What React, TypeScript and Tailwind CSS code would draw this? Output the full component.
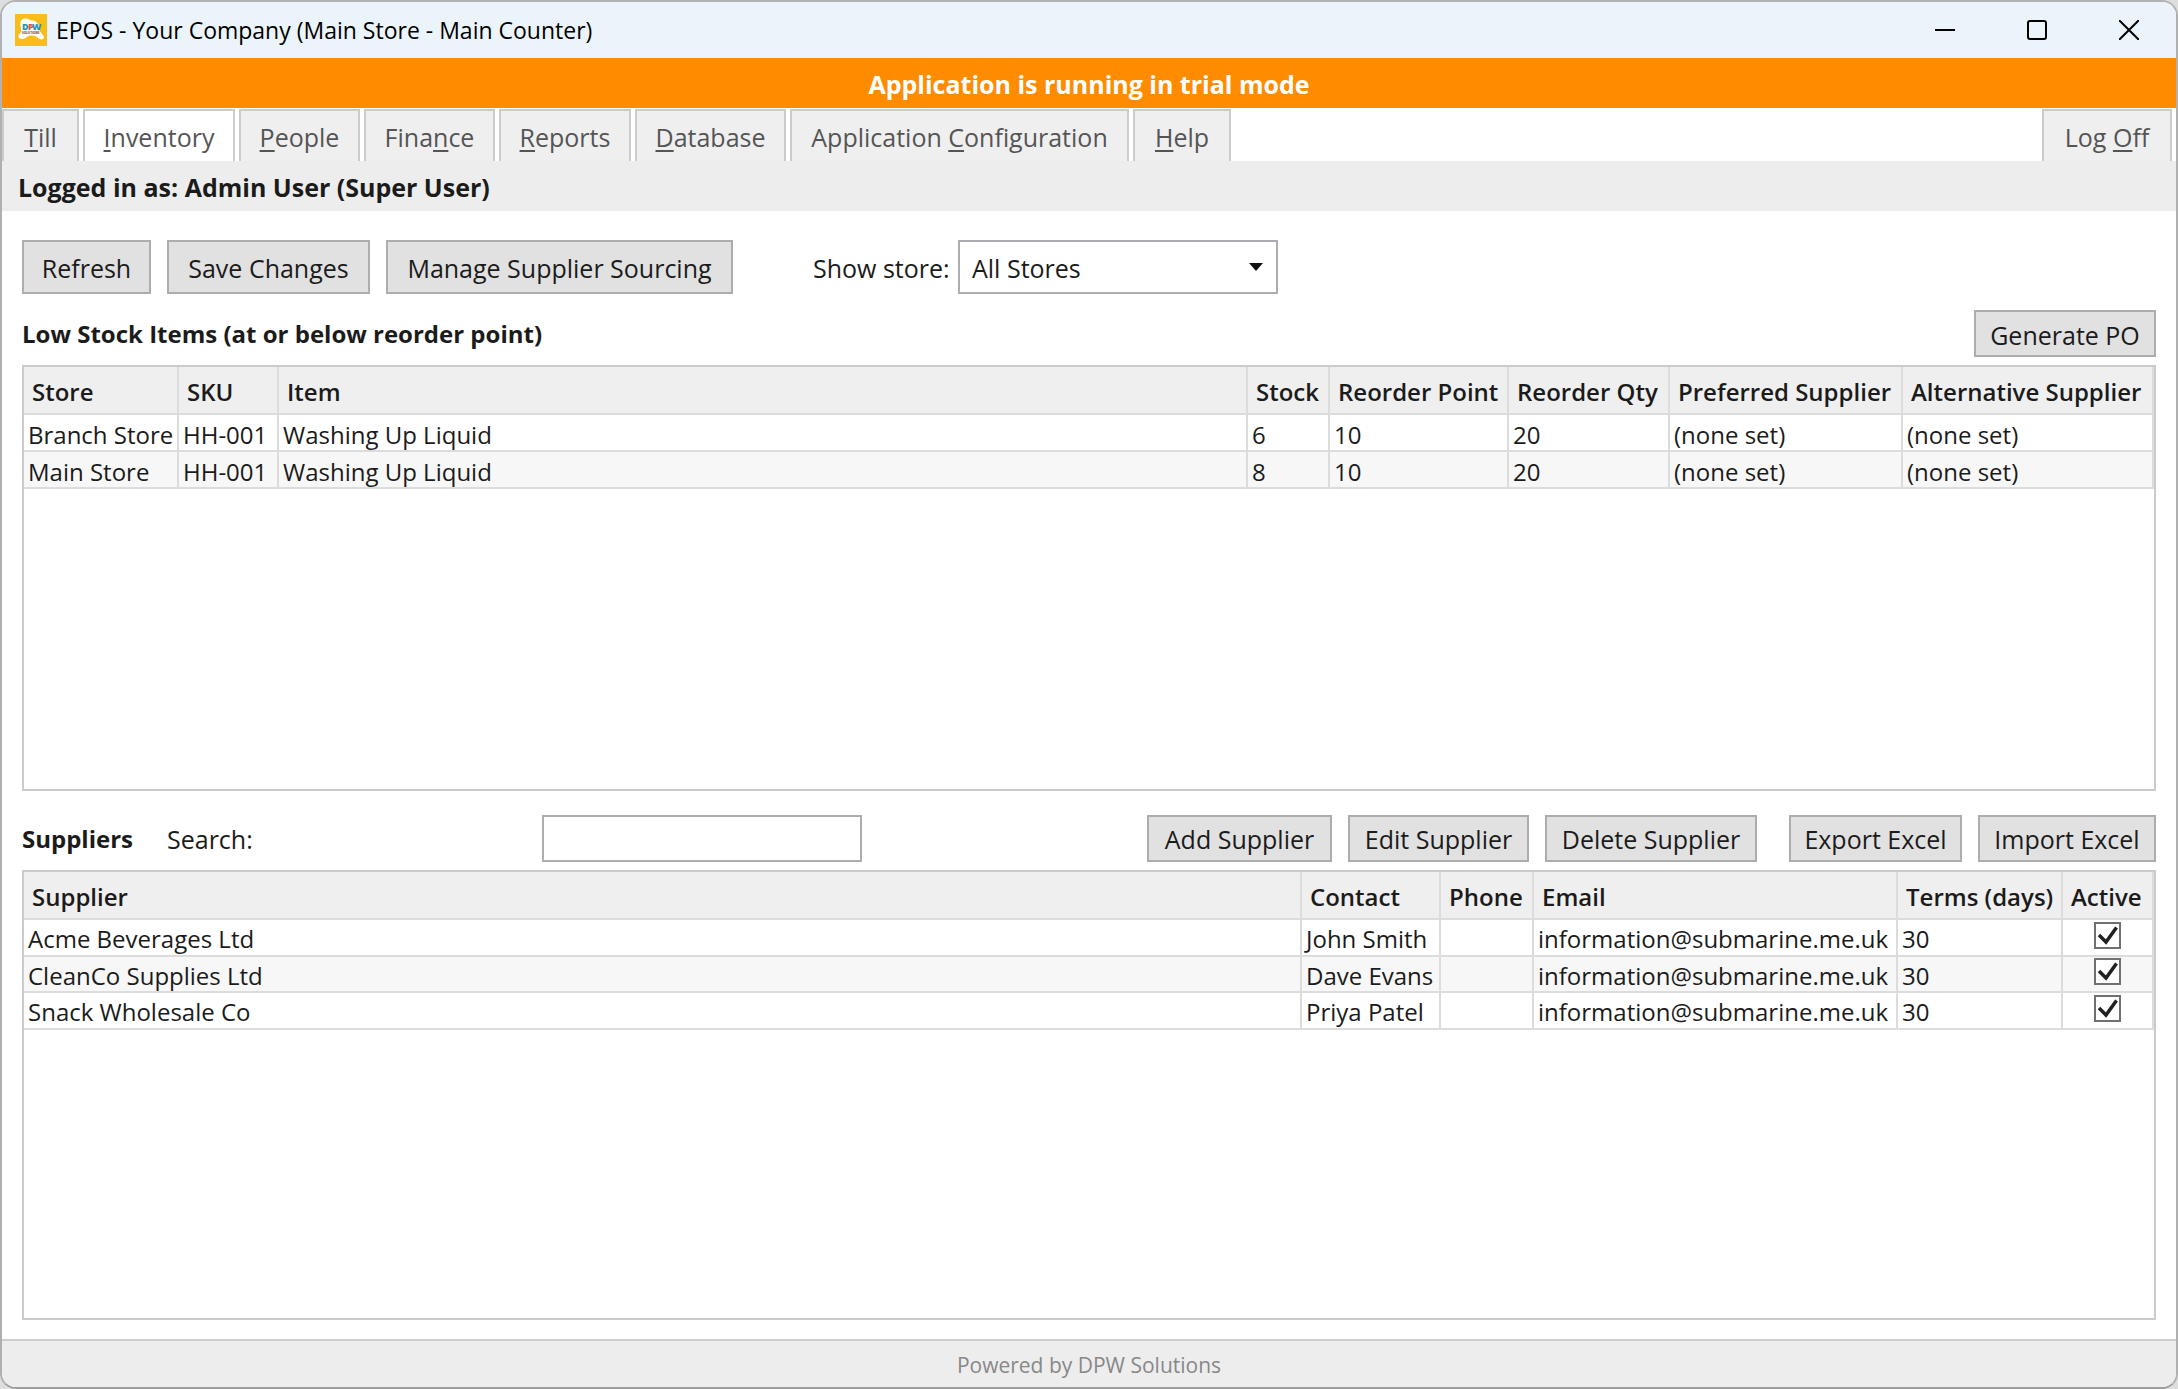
import React, { useState } from "react";

interface ITab {
  before?: string;
  hotkey: string;
  after: string;
  width: string;
}

const tabs: ITab[] = [
  { hotkey: "T", after: "ill", width: "w-[77px]" },
  { hotkey: "I", after: "nventory", width: "w-[152px]" },
  { hotkey: "P", after: "eople", width: "w-[121px]" },
  { before: "Fina", hotkey: "n", after: "ce", width: "w-[131px]" },
  { hotkey: "R", after: "eports", width: "w-[132px]" },
  { hotkey: "D", after: "atabase", width: "w-[151px]" },
  { before: "Application ", hotkey: "C", after: "onfiguration", width: "w-[339px]" },
  { hotkey: "H", after: "elp", width: "w-[98px]" },
];

const lowStock = [
  { store: "Branch Store", sku: "HH-001", item: "Washing Up Liquid", stock: 6, point: 10, qty: 20 },
  { store: "Main Store", sku: "HH-001", item: "Washing Up Liquid", stock: 8, point: 10, qty: 20 },
];

const supplierRows = [
  { name: "Acme Beverages Ltd", contact: "John Smith" },
  { name: "CleanCo Supplies Ltd", contact: "Dave Evans" },
  { name: "Snack Wholesale Co", contact: "Priya Patel" },
];

const Logo = () => (
  <svg viewBox="0 0 32 32" className="size-8" aria-hidden="true">
    <rect width="32" height="32" fill="#f8bd18" />
    <path
      d="M6 7c1-3 6-3 9-1 2 1 5 0 6 2 3 2 4 5 3 8 1 2 4 4 5 7 0 3-4 3-6 1-3-3-8-3-11-1-2 2-6 3-8 1-2-3 1-4 2-6 1-4-2-7 0-11z"
      fill="#fff"
    />
    <g fontFamily="Open Sans, sans-serif" fontWeight="800" fontSize="9">
      <text x="7" y="16" fill="#2496b5">D</text>
      <text x="13" y="16" fill="#e0523f">P</text>
      <text x="17" y="16" fill="#2496b5">W</text>
    </g>
    <text x="7" y="20" fill="#8a5a3a" fontFamily="Open Sans, sans-serif" fontWeight="800" fontSize="3">
      SOLUTIONS
    </text>
  </svg>
);

const Tab: React.FC<ITab & { active?: boolean; onClick?: () => void }> = ({
  before,
  hotkey,
  after,
  width,
  active,
  onClick,
}) => (
  <button
    type="button"
    onClick={onClick}
    className={`${width} ${
      active ? "bg-white" : "bg-[#efefef]"
    } flex h-full items-center justify-center whitespace-pre border-2 border-b-0 border-[#cbcbcb] pt-0.5 text-[#555]`}
  >
    <span>
      {before}
      <span className="underline decoration-2 underline-offset-3">{hotkey}</span>
      {after}
    </span>
  </button>
);

const Button: React.FC<{ width: string; tall?: boolean; children: string }> = ({ width, tall, children }) => (
  <button
    type="button"
    className={`${width} ${
      tall ? "h-[54px]" : "h-[47px]"
    } whitespace-nowrap border-2 border-[#adadad] bg-[#e1e1e1] pt-0.5 hover:border-[#3c7fb1] hover:bg-[#bee6fd]`}
  >
    {children}
  </button>
);

const Th: React.FC<{ width?: string; children: string }> = ({ width = "", children }) => (
  <th
    scope="col"
    className={`${width} h-12 whitespace-nowrap border-r-2 border-b-2 border-[#dcdcdc] bg-[#efefef] pt-1 pl-2 text-left font-semibold`}
  >
    {children}
  </th>
);

const Td: React.FC<{ children?: React.ReactNode }> = ({ children }) => (
  <td className="whitespace-nowrap border-r-2 border-b-2 border-[#dcdcdc] pt-1 pl-1 leading-[30px]">{children}</td>
);

const CheckBox: React.FC<{ label: string }> = ({ label }) => (
  <div className="relative flex h-8 justify-center">
    <input
      type="checkbox"
      aria-label={label}
      defaultChecked
      className="peer size-[27px] appearance-none border-2 border-[#707070] bg-white"
    />
    <svg
      viewBox="0 0 27 27"
      className="pointer-events-none absolute top-0 hidden size-[27px] peer-checked:block"
      aria-hidden="true"
    >
      <path d="M5 13l7 7L22.500 5.500" fill="none" stroke="#212121" strokeWidth="3.500" />
    </svg>
  </div>
);

const App = () => {
  const [active, setActive] = useState(1);
  const [search, setSearch] = useState("");

  return (
    <div className="min-h-screen bg-[#dedede] font-['Open_Sans','Noto_Sans',sans-serif] text-[25px] leading-8 text-[#1b1b1b]">
      <div className="flex min-h-screen flex-col overflow-hidden rounded-2xl border-2 border-t-[#b3b3b3] border-x-[#b0b0b0] border-b-[#9f9f9f] bg-white">
        <header className="flex h-14 shrink-0 items-center bg-[#ebf4fa] pr-px pl-[13px]">
          <Logo />
          <h1 className="ml-[9px] text-[23px] text-black">EPOS - Your Company (Main Store - Main Counter)</h1>
          <div className="ml-auto flex h-full text-black">
            <button type="button" aria-label="Minimize" className="flex w-[92px] items-center justify-center">
              <svg viewBox="0 0 20 20" className="size-5" stroke="currentColor" strokeWidth="2" fill="none">
                <path d="M0 10h20" />
              </svg>
            </button>
            <button type="button" aria-label="Maximize" className="flex w-[92px] items-center justify-center">
              <svg viewBox="0 0 20 20" className="size-5" stroke="currentColor" strokeWidth="2" fill="none">
                <rect x="1" y="1" width="18" height="18" rx="2" />
              </svg>
            </button>
            <button type="button" aria-label="Close" className="flex w-[92px] items-center justify-center">
              <svg viewBox="0 0 20 20" className="size-5" stroke="currentColor" strokeWidth="2" fill="none">
                <path d="M0 0l20 20M20 0L0 20" />
              </svg>
            </button>
          </div>
        </header>

        <div className="flex h-[50px] shrink-0 items-center justify-center bg-[#ff8c00] pt-0.5 font-bold text-white">
          Application is running in trial mode
        </div>

        <nav className="flex h-[53px] shrink-0 gap-1 pt-px pr-1">
          {tabs.map((tab, i) => (
            <Tab key={tab.after} {...tab} active={i === active} onClick={() => setActive(i)} />
          ))}
          <div className="ml-auto">
            <Tab before="Log " hotkey="O" after="ff" width="w-[130px]" />
          </div>
        </nav>

        <div className="flex h-[50px] shrink-0 items-center bg-[#ededed] pt-0.5 pl-4 font-bold">
          Logged in as: Admin User (Super User)
        </div>

        <main className="flex flex-1 flex-col px-5 pt-[29px] pb-[19px]">
          <div className="flex items-center gap-4">
            <Button width="w-[129px]" tall>Refresh</Button>
            <Button width="w-[203px]" tall>Save Changes</Button>
            <Button width="w-[347px]" tall>Manage Supplier Sourcing</Button>
            <div className="ml-16 flex w-[465px] items-center justify-between">
              <label htmlFor="store" className="pt-0.5">Show store:</label>
              <div className="relative w-80">
                <select
                  id="store"
                  className="h-[54px] w-full appearance-none border-2 border-[#abadb3] bg-white pt-0.5 pl-3"
                >
                  <option>All Stores</option>
                  <option>Branch Store</option>
                  <option>Main Store</option>
                </select>
                <svg
                  viewBox="0 0 14 8"
                  className="pointer-events-none absolute top-[23px] right-[15px] h-2 w-3.5"
                  aria-hidden="true"
                >
                  <path d="M0 0h14L7 8z" fill="#111" />
                </svg>
              </div>
            </div>
          </div>

          <div className="mt-4 grid flex-1 grid-rows-[20fr_21fr] gap-6">
            <section className="flex flex-col">
              <div className="flex items-center justify-between">
                <h2 className="text-2xl font-bold">Low Stock Items (at or below reorder point)</h2>
                <Button width="w-[182px]">Generate PO</Button>
              </div>
              <div className="mt-2 flex-1 border-2 border-[#cbcbcb]">
                <table className="w-full table-fixed border-separate border-spacing-0 text-2xl">
                  <thead>
                    <tr>
                      <Th width="w-[155px]">Store</Th>
                      <Th width="w-[100px]">SKU</Th>
                      <Th>Item</Th>
                      <Th width="w-[82px]">Stock</Th>
                      <Th width="w-[179px]">Reorder Point</Th>
                      <Th width="w-[161px]">Reorder Qty</Th>
                      <Th width="w-[233px]">Preferred Supplier</Th>
                      <Th width="w-[251px]">Alternative Supplier</Th>
                    </tr>
                  </thead>
                  <tbody>
                    {lowStock.map((row) => (
                      <tr key={row.store} className="h-[37px] bg-white even:bg-[#f7f7f7]">
                        <Td>{row.store}</Td>
                        <Td>{row.sku}</Td>
                        <Td>{row.item}</Td>
                        <Td>{row.stock}</Td>
                        <Td>{row.point}</Td>
                        <Td>{row.qty}</Td>
                        <Td>(none set)</Td>
                        <Td>(none set)</Td>
                      </tr>
                    ))}
                  </tbody>
                </table>
              </div>
            </section>

            <section className="flex flex-col">
              <div className="flex items-center gap-4">
                <div className="flex w-[840px] items-center">
                  <h2 className="w-[145px] pt-0.5 text-2xl font-bold">Suppliers</h2>
                  <label htmlFor="search" className="pt-0.5">Search:</label>
                  <input
                    id="search"
                    type="text"
                    value={search}
                    onChange={(e) => setSearch(e.target.value)}
                    className="ml-auto h-[47px] w-80 border-2 border-[#abadb3] bg-white px-2"
                  />
                </div>
                <div className="ml-auto flex gap-4">
                  <Button width="w-[185px]">Add Supplier</Button>
                  <Button width="w-[181px]">Edit Supplier</Button>
                  <Button width="w-[212px]">Delete Supplier</Button>
                </div>
                <div className="ml-4 flex gap-4">
                  <Button width="w-[173px]">Export Excel</Button>
                  <Button width="w-[178px]">Import Excel</Button>
                </div>
              </div>
              <div className="mt-2 flex-1 border-2 border-[#cbcbcb]">
                <table className="w-full table-fixed border-separate border-spacing-0 text-2xl">
                  <thead>
                    <tr>
                      <Th>Supplier</Th>
                      <Th width="w-[139px]">Contact</Th>
                      <Th width="w-[93px]">Phone</Th>
                      <Th width="w-[364px]">Email</Th>
                      <Th width="w-[165px]">Terms (days)</Th>
                      <Th width="w-[91px]">Active</Th>
                    </tr>
                  </thead>
                  <tbody>
                    {supplierRows.map((row) => (
                      <tr key={row.name} className="h-[37px] even:h-9 even:bg-[#f7f7f7]">
                        <Td>{row.name}</Td>
                        <Td>{row.contact}</Td>
                        <Td />
                        <Td>information@submarine.me.uk</Td>
                        <Td>30</Td>
                        <td className="border-r-2 border-b-2 border-[#dcdcdc] pt-px">
                          <CheckBox label={`${row.name} active`} />
                        </td>
                      </tr>
                    ))}
                  </tbody>
                </table>
              </div>
            </section>
          </div>
        </main>

        <footer className="flex h-12 shrink-0 items-center justify-center border-t-2 border-[#cfcfcf] bg-[#ededed] pt-0.5 text-[21px] text-[#888]">
          Powered by DPW Solutions
        </footer>
      </div>
    </div>
  );
};

export default App;
